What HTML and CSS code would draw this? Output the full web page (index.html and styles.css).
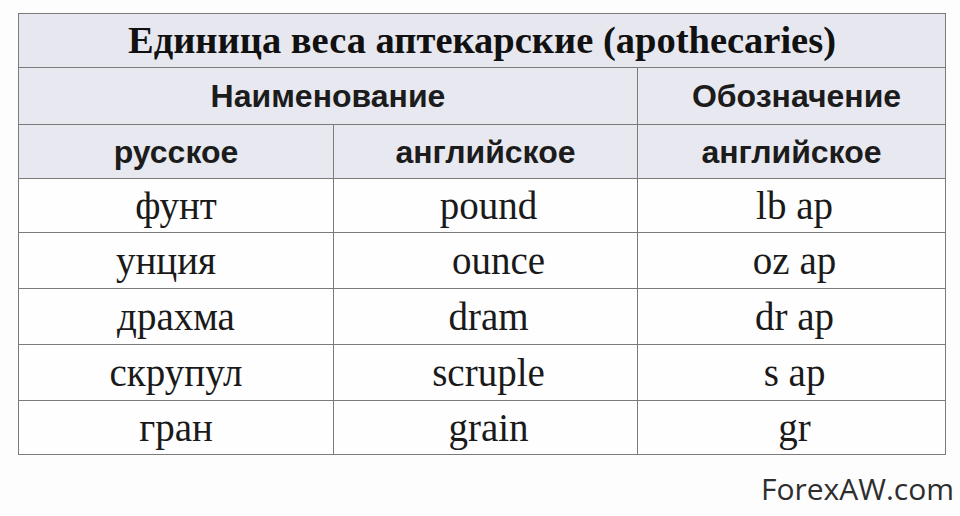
FILE: index.html
```html
<!DOCTYPE html>
<html lang="ru">
<head>
<meta charset="utf-8">
<title>Единица веса аптекарские</title>
<link rel="stylesheet" href="styles.css">
</head>
<body>
<div class="page">
  <table class="units">
    <colgroup>
      <col class="c1"><col class="c2"><col class="c3">
    </colgroup>
    <tr class="r-title"><th colspan="3" class="title">Единица веса аптекарские (apothecaries)</th></tr>
    <tr class="r-head1"><th colspan="2" class="head">Наименование</th><th class="head sym">Обозначение</th></tr>
    <tr class="r-head2"><th class="head">русское</th><th class="head">английское</th><th class="head">английское</th></tr>
    <tr class="r-a"><td>фунт</td><td class="en">pound</td><td class="sym">lb ap</td></tr>
    <tr class="r-b"><td class="left">унция</td><td class="shift">ounce</td><td class="sym">oz ap</td></tr>
    <tr class="r-b"><td>драхма</td><td class="en">dram</td><td class="sym">dr ap</td></tr>
    <tr class="r-b"><td>скрупул</td><td class="en">scruple</td><td class="sym">s ap</td></tr>
    <tr class="r-a"><td>гран</td><td class="en">grain</td><td class="sym">gr</td></tr>
  </table>
  <div class="mark">ForexAW.com</div>
</div>
</body>
</html>
```
FILE: styles.css
```css
html, body {
  margin: 0;
  padding: 0;
  background: #fdfdfd;
}
.page {
  width: 960px;
  height: 516px;
  padding: 13px 0 0 18px;
  box-sizing: border-box;
}
.units {
  border-collapse: collapse;
  table-layout: fixed;
  width: 927px;
  color: #111;
}
.c1 { width: 315px; }
.c2 { width: 304px; }
.c3 { width: 308px; }
.units th, .units td {
  border: 1px solid #7b7b7b;
  padding: 0;
  text-align: center;
  vertical-align: middle;
  line-height: 1;
}
.title {
  background: #e7e7ef;
  font-family: "Liberation Serif", "Times New Roman", serif;
  font-weight: bold;
  font-size: 38.5px;
  height: 53px;
}
.head {
  background: #e8e8f0;
  font-family: "Liberation Sans", Arial, sans-serif;
  font-weight: bold;
  font-size: 32px;
  color: #1c1c1c;
}
.r-head1 .head { height: 56px; }
.r-head2 .head { height: 53px; }
.units .head.sym { padding-left: 10px; }
.units td {
  background: #fefefe;
  font-family: "Liberation Serif", "Times New Roman", serif;
  font-size: 39px;
  color: #1a1a1a;
}
.r-a td { height: 53px; }
.r-b td { height: 55px; }
.units td.en { padding-left: 6px; }
.units td.sym { padding-left: 6px; }
.units td.shift { padding-left: 26px; }
.units td.left { padding-right: 20px; }
.mark {
  width: 936px;
  margin-top: 19px;
  text-align: right;
  font-family: "Open Sans", "Liberation Sans", sans-serif;
  font-size: 30px;
  line-height: 1;
  color: #2e2e2e;
}
```
